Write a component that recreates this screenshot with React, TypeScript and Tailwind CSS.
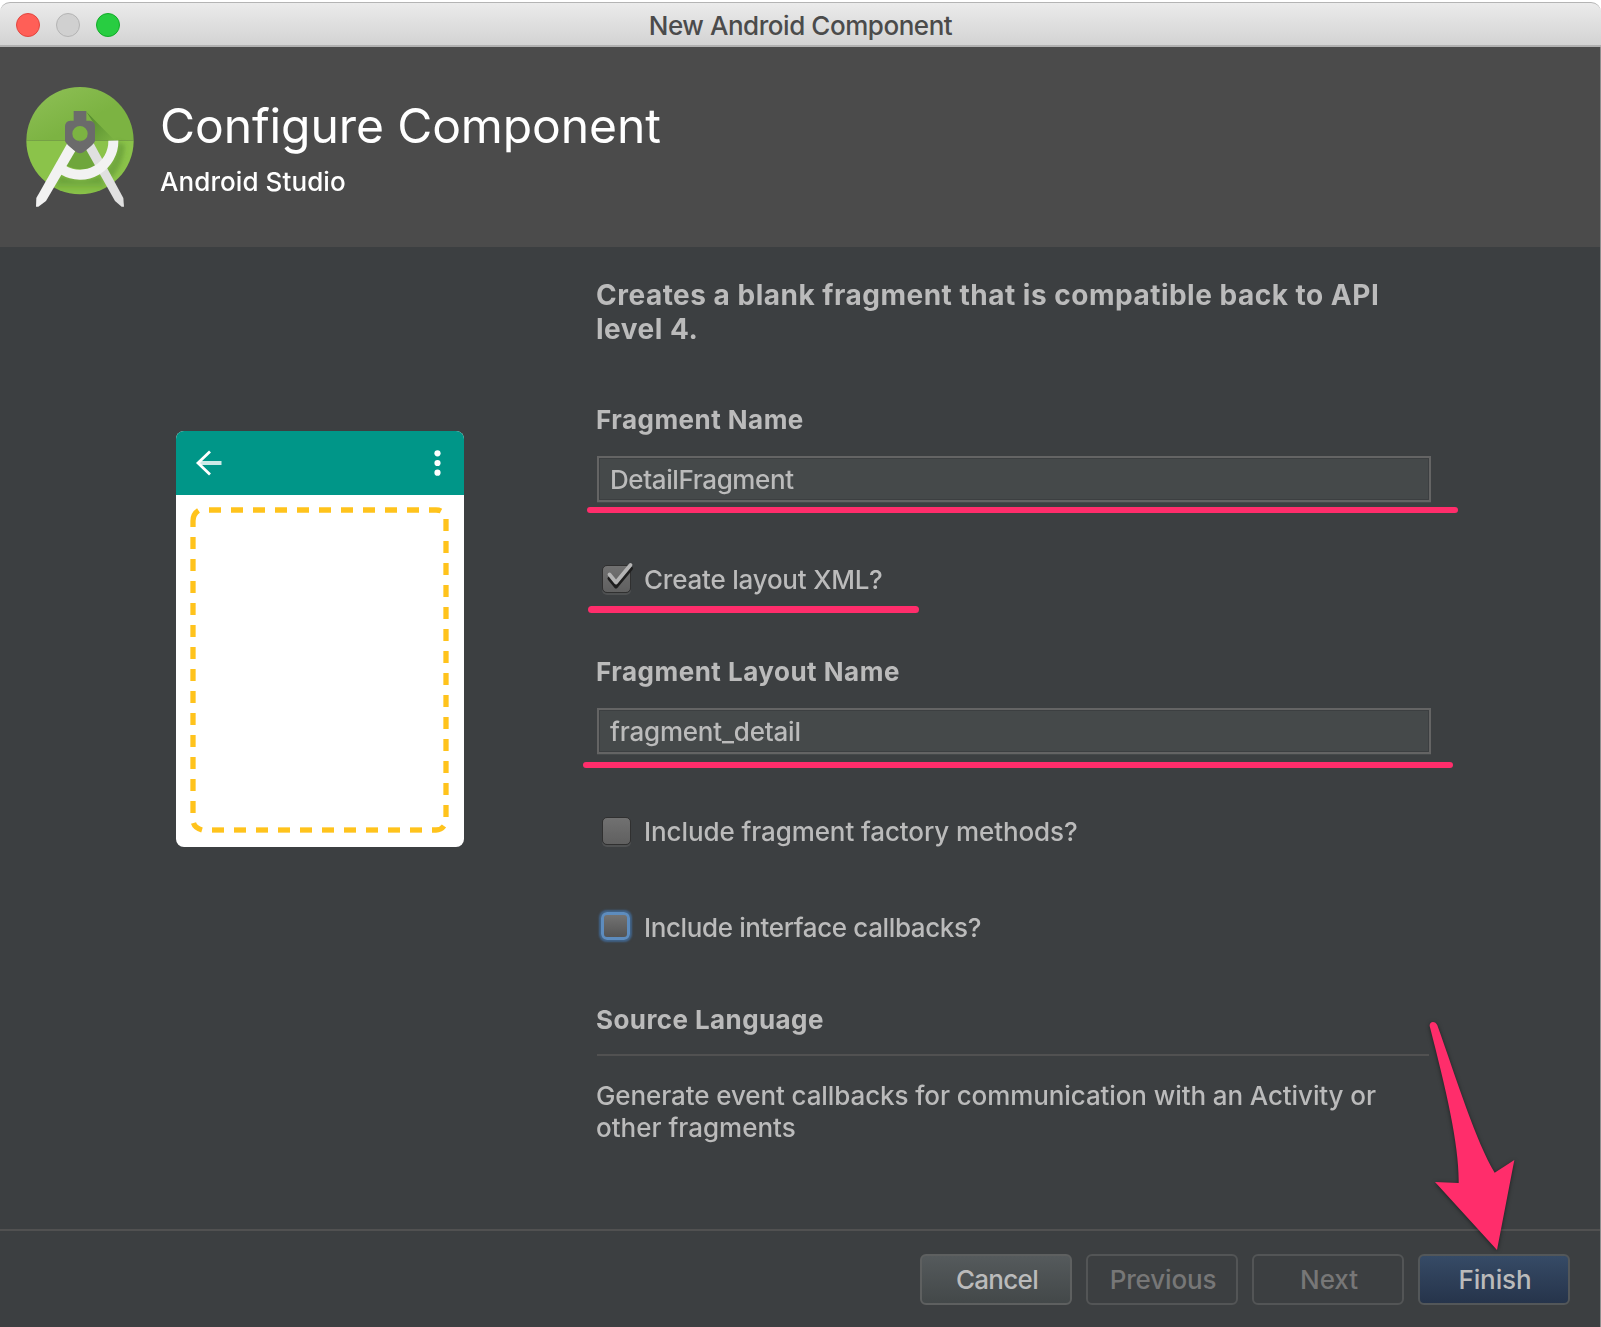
import type { ReactNode } from "react";

function TitleBar() {
  return (
    <div className="h-[47px] bg-white pt-[2px]">
      <div className="relative flex h-[45px] items-center justify-center rounded-t-[10px] border-t border-[#b4b4b4] bg-linear-to-b from-[#ebebeb] to-[#d2d2d2]">
        <div className="absolute top-[10px] left-4 flex gap-4">
          <span className="size-6 rounded-full border border-[#e2463f] bg-[#ff5f57]" />
          <span className="size-6 rounded-full border border-[#b4b4b4] bg-[#d0d0d0]" />
          <span className="size-6 rounded-full border border-[#12ac28] bg-[#28cd41]" />
        </div>
        <span className="pt-[2px] text-[26px] leading-8 font-[450] tracking-[-0.45px] text-[#4b4b4b]">New Android Component</span>
        <span className="absolute inset-x-0 bottom-0 h-[2px] bg-[#b1b1b1]" />
      </div>
    </div>
  );
}

function StudioLogo() {
  return (
    <svg viewBox="0 0 390 420" className="h-[140px] w-[130px] shrink-0">
      <defs>
        <clipPath id="disc">
          <circle cx="195" cy="197" r="161" />
        </clipPath>
        <linearGradient id="shade" x1="0" y1="0" x2="1" y2="1">
          <stop offset="0" stopColor="#33691e" stopOpacity="0.6" />
          <stop offset="1" stopColor="#33691e" stopOpacity="0" />
        </linearGradient>
        <linearGradient id="shadeDown" x1="0" y1="0" x2="0" y2="1">
          <stop offset="0" stopColor="#33691e" stopOpacity="0.5" />
          <stop offset="1" stopColor="#33691e" stopOpacity="0" />
        </linearGradient>
        <linearGradient id="top" x1="0" y1="0" x2="1" y2="1">
          <stop offset="0" stopColor="#90c158" />
          <stop offset="0.6" stopColor="#7cb342" />
        </linearGradient>
        <filter id="soft">
          <feGaussianBlur stdDeviation="6" />
        </filter>
      </defs>
      <g clipPath="url(#disc)">
        <rect x="30" y="30" width="330" height="167" fill="url(#top)" />
        <rect x="30" y="197" width="330" height="170" fill="#8bc34a" />
        <path d="M214 110 L300 197 L236 197 L236 145 Z" fill="url(#shade)" />
        <path d="M160 215 L228 210 L262 268 Q200 296 150 270 Z" fill="#689f38" opacity="0.8" />
        <g filter="url(#soft)">
          <path d="M308 200 L330 210 Q325 270 290 310 L268 290 Q306 250 308 200 Z" fill="#558b2f" opacity="0.5" />
          <path d="M134 302 Q195 325 256 302 L280 350 L110 350 Z" fill="url(#shadeDown)" />
        </g>
      </g>
      <path d="M211 220 L236 205 L325 369 L327 395 L320 395 L300 378 Z" fill="#e0e0e0" />
      <path d="M295 197 A100 100 0 0 1 144 285" fill="none" stroke="#f2f2f2" strokeWidth="30" />
      <path d="M157 205 L181 228 L93 378 L70 395 L63 395 L64 369 Z" fill="#f2f2f2" />
      <path
        fillRule="evenodd"
        d="M176 108 H214 V137 H224 Q240 139 240 154 V198 Q238 206 214 225 L205 232 Q195 238 185 232 L176 225 Q152 206 150 198 V154 Q150 139 166 137 H176 Z M195 153 A23 23 0 1 0 195 199 A23 23 0 1 0 195 153 Z"
        fill="#6b6b6b"
      />
    </svg>
  );
}

function Header() {
  return (
    <header className="flex h-[200px] bg-[#4b4b4b] pt-7 pl-[15px]">
      <StudioLogo />
      <div className="ml-[15px] pt-[23px] text-white">
        <h1 className="text-[48px] leading-[56px] font-[440] tracking-[-0.1px]">Configure Component</h1>
        <p className="mt-3 text-[26px] leading-8 font-[460] tracking-[0.08px]">Android Studio</p>
      </div>
    </header>
  );
}

const topDashes = Array.from({ length: 10 }, (_, i) => 33 + i * 22);
const bottomDashes = Array.from({ length: 10 }, (_, i) => 36 + i * 22);
const leftDashes = Array.from({ length: 13 }, (_, i) => 42 + i * 22);
const rightDashes = Array.from({ length: 14 }, (_, i) => 24 + i * 22);

function FragmentPreview() {
  return (
    <div className="h-[416px] w-[288px] overflow-hidden rounded-[8px] bg-white">
      <div className="flex h-16 items-center justify-between bg-[#009688] pr-[23px] pl-[19px]">
        <svg viewBox="0 0 28 28" className="size-7">
          <path d="M3 14 H26.5" stroke="#cceae7" strokeWidth="4" />
          <path d="M15 2.5 L3 14 L15 25.5" fill="none" stroke="#fff" strokeWidth="2.8" />
        </svg>
        <svg viewBox="0 0 7 28" className="h-7 w-[7px]" fill="#fff">
          <circle cx="3.5" cy="4.3" r="3.1" />
          <circle cx="3.5" cy="14" r="3.1" />
          <circle cx="3.5" cy="23.7" r="3.1" />
        </svg>
      </div>
      <svg viewBox="0 0 288 352" className="h-[352px] w-[288px]" fill="none" stroke="#ffc31c" strokeWidth="5.3">
        {topDashes.map((x) => (
          <path key={x} d={`M${x} 15 h12`} />
        ))}
        {bottomDashes.map((x) => (
          <path key={x} d={`M${x} 335 h12`} />
        ))}
        {leftDashes.map((y) => (
          <path key={y} d={`M17 ${y} v12`} />
        ))}
        {rightDashes.map((y) => (
          <path key={y} d={`M270 ${y} v12`} />
        ))}
        <path d="M17 32 V26 Q17 19 22.5 15.5" />
        <path d="M253 15 H260 Q263 15 265 16" />
        <path d="M17.5 328 Q19 333 26 335" />
        <path d="M256 335 H260 Q265 335 268 331" />
      </svg>
    </div>
  );
}

function Field({ children }: { children: ReactNode }) {
  return (
    <div className="mt-5 flex h-[46px] w-[834px] items-center border-2 border-[#646464] bg-[#45494a] pt-[2px] text-[26px] leading-8 font-[450] shadow-[inset_0_0_0_1px_#3c3f41,0_1px_0_#45494a]">
      {children}
    </div>
  );
}

function Checkbox({ checked = false, focused = false }: { checked?: boolean; focused?: boolean }) {
  if (focused) {
    return (
      <span className="ml-1 h-7 w-[29px] rounded-[6px] border-[3px] border-[#5d8cbe] bg-linear-to-b from-[#737373] to-[#545454] shadow-[0_0_2px_2px_#41648a]" />
    );
  }
  return (
    <span className="relative mt-[1px] ml-[5px] h-7 w-[29px] rounded-[5px] border border-[#303030] bg-linear-to-b from-[#717171] to-[#606060] shadow-[0_2px_0_#4f5152]">
      {checked && (
        <svg viewBox="0 0 28 28" className="absolute -top-px left-0 size-7 overflow-visible" fill="none" strokeLinecap="round" strokeLinejoin="round">
          <path d="M6.5 13.5 L13 21.5 L28 3.5" stroke="#1e1e1e" strokeWidth="4" />
          <path d="M6.5 9.5 L13 17.5 L27.5 0" stroke="#b4b4b4" strokeWidth="3.8" />
        </svg>
      )}
    </span>
  );
}

function Option({ checked, focused, children }: { checked?: boolean; focused?: boolean; children: ReactNode }) {
  return (
    <div className="flex h-8 text-[26px] leading-8 font-[450]">
      <div className="w-[47px]">
        <div className="flex">
          <Checkbox checked={checked} focused={focused} />
        </div>
      </div>
      {children}
    </div>
  );
}

function Form() {
  return (
    <main className="flex h-[982px] text-[#bbbbbb]">
      <div className="w-[597px] pt-[184px] pl-44">
        <FragmentPreview />
      </div>
      <div className="relative pt-[31px]">
        <p className="-ml-px w-[834px] text-[28px] leading-[34px] font-bold tracking-[0.5px]">
          Creates a blank fragment that is compatible back to API
          <br />
          level 4.
        </p>
        <h2 className="mt-[58px] -ml-px text-[26px] leading-8 font-bold tracking-[0.47px]">Fragment Name</h2>
        <Field>
          <span className="ml-[11px] tracking-[-0.4px]">DetailFragment</span>
        </Field>
        <div className="mt-[62px]">
          <Option checked>
            <span className="tracking-[-0.22px]">Create layout XML?</span>
          </Option>
        </div>
        <h2 className="mt-[60px] -ml-px text-[26px] leading-8 font-bold tracking-[0.49px]">Fragment Layout Name</h2>
        <Field>
          <span className="ml-[11px] tracking-[-0.2px]">fragment_detail</span>
        </Field>
        <div className="mt-[62px] flex flex-col gap-16">
          <Option>
            <span className="tracking-[-0.1px]">Include fragment factory methods?</span>
          </Option>
          <Option focused>
            <span className="tracking-[-0.38px]">Include interface callbacks?</span>
          </Option>
        </div>
        <h2 className="mt-[60px] -ml-px text-[26px] leading-8 font-bold tracking-[0.41px]">Source Language</h2>
        <div className="mt-[18px] h-[2px] w-[832px] bg-[#515151]" />
        <p className="mt-6 -ml-px text-[26px] leading-8 font-[450] tracking-[-0.1px]">
          Generate event callbacks for communication with an Activity or
          <br />
          <span className="tracking-[-0.01px]">other fragments</span>
        </p>

        {/* highlight strokes */}
        <span className="absolute top-[260px] -left-[10px] h-1.5 w-[871px] rounded-full bg-[#ff2d6b]" />
        <span className="absolute top-[359px] -left-[9px] h-[7px] w-[331px] rounded-full bg-[#ff2d6b]" />
        <span className="absolute top-[515px] -left-[14px] h-1.5 w-[870px] rounded-full bg-[#ff2d6b]" />
      </div>
    </main>
  );
}

function Footer() {
  const base = "flex h-[51px] w-[152px] items-center justify-center rounded-[6px] border-2 pl-[3px] text-[26px] leading-8 font-[450]";
  return (
    <footer className="flex h-[98px] justify-end gap-[14px] border-t-2 border-[#515151] pt-[23px] pr-[31.5px]">
      <button className={`${base} border-[#5e6060] bg-linear-to-b from-[#555a5c] to-[#434849] tracking-[-0.7px] text-[#bbbbbb]`}>Cancel</button>
      <button className={`${base} border-[#535556] tracking-[-0.15px] text-[#777777]`}>Previous</button>
      <button className={`${base} border-[#535556] tracking-[-0.1px] text-[#777777]`}>Next</button>
      <button className={`${base} border-[#535759] bg-linear-to-b from-[#364b66] to-[#26344b] tracking-[-0.1px] text-[#bbbbbb]`}>Finish</button>
    </footer>
  );
}

export default function App() {
  return (
    <div className="relative h-[1327px] w-[1601px] overflow-hidden bg-[#3c3f41] font-['Inter',sans-serif]">
      <TitleBar />
      <Header />
      <Form />
      <Footer />
      <span className="absolute top-[47px] right-0 bottom-0 w-px bg-[#8f8f8f]" />
      <svg viewBox="0 0 753 981" className="absolute top-[1000px] left-[1350px] h-[327px] w-[251px] drop-shadow-[0_1px_2px_rgba(0,0,0,0.5)]">
        <path d="M239 78 C238 62 257 62 262 76 C322 245 378 425 434 518 L493 480 L441 750 L255 546 L326 549 C328 440 290 275 239 78 Z" fill="#ff2d6b" />
      </svg>
    </div>
  );
}
